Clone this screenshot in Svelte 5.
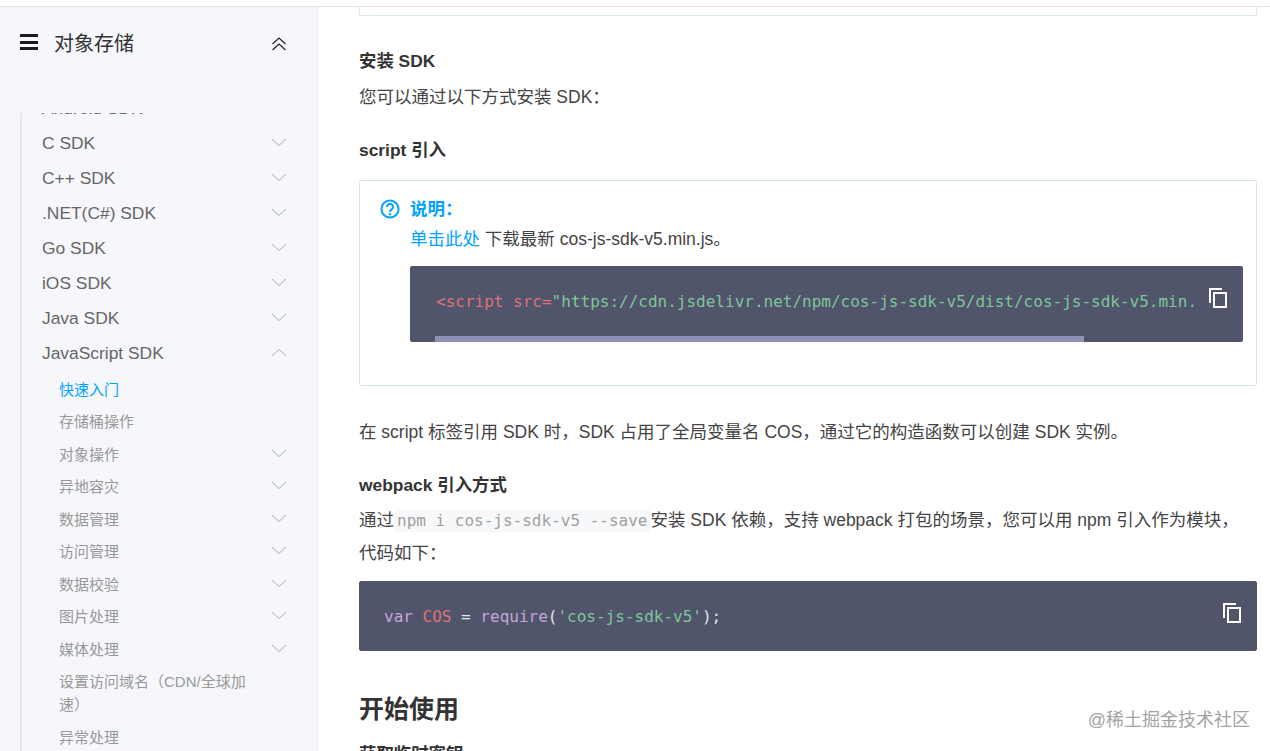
<script>
	const sdks = [
		{ name: 'Android SDK', open: false },
		{ name: 'C SDK', open: false },
		{ name: 'C++ SDK', open: false },
		{ name: '.NET(C#) SDK', open: false },
		{ name: 'Go SDK', open: false },
		{ name: 'iOS SDK', open: false },
		{ name: 'Java SDK', open: false },
		{ name: 'JavaScript SDK', open: true }
	];

	const guides = [
		{ name: '快速入门', active: true },
		{ name: '存储桶操作' },
		{ name: '对象操作', more: true },
		{ name: '异地容灾', more: true },
		{ name: '数据管理', more: true },
		{ name: '访问管理', more: true },
		{ name: '数据校验', more: true },
		{ name: '图片处理', more: true },
		{ name: '媒体处理', more: true },
		{ name: '设置访问域名（CDN/全球加速）' },
		{ name: '异常处理' }
	];
</script>

<div class="page">
	<aside class="sidebar">
		<header class="side-head">
			<span class="burger"><i></i><i></i><i></i></span>
			<span class="side-title">对象存储</span>
			<svg class="collapse" width="16" height="14" viewBox="0 0 16 14" fill="none" stroke="#222" stroke-width="1.2">
				<path d="M1.5 7 8 1l6.5 6" />
				<path d="M1.5 13 8 7l6.5 6" />
			</svg>
		</header>
		<nav class="tree">
			<ul class="sdk-list">
				{#each sdks as sdk}
					<li class="sdk">
						<span>{sdk.name}</span>
						<svg class="chev" width="16" height="9" viewBox="0 0 16 9" fill="none" stroke="#a9abb3" stroke-width="1">
							{#if sdk.open}
								<path d="M1 8 8 1.5 15 8" />
							{:else}
								<path d="M1 1 8 7.5 15 1" />
							{/if}
						</svg>
					</li>
				{/each}
			</ul>
			<ul class="guide-list">
				{#each guides as item}
					<li class="guide" class:active={item.active}>
						<span class="guide-name">{item.name}</span>
						{#if item.more}
							<svg class="chev" width="16" height="9" viewBox="0 0 16 9" fill="none" stroke="#a9abb3" stroke-width="1">
								<path d="M1 1 8 7.5 15 1" />
							</svg>
						{/if}
					</li>
				{/each}
			</ul>
		</nav>
	</aside>

	<main class="content">
		<div class="stub"></div>

		<h3 class="first">安装 SDK</h3>
		<p class="lead">您可以通过以下方式安装 SDK：</p>

		<h3 class="script-title">script 引入</h3>
		<section class="note">
			<div class="note-head">
				<svg width="20" height="20" viewBox="0 0 20 20" fill="none">
					<circle cx="10" cy="10" r="8.6" stroke="#00a4ff" stroke-width="2" />
					<path d="M7 8a3 3 0 1 1 4.8 2.3c-1.1.8-1.8 1.3-1.8 2.5" stroke="#00a4ff" stroke-width="2" />
					<circle cx="10" cy="15.2" r="1.2" fill="#00a4ff" />
				</svg>
				<strong>说明：</strong>
			</div>
			<div class="note-body">
				<p><a href="#top">单击此处</a> 下载最新 cos-js-sdk-v5.min.js。</p>
				<div class="code code-scroll">
					<pre><span class="red">&lt;script</span> <span class="red">src=</span><span class="green">"https://cdn.jsdelivr.net/npm/cos-js-sdk-v5/dist/cos-js-sdk-v5.min.js"</span><span class="red">&gt;&lt;/script&gt;</span></pre>
					<svg class="copy" width="18" height="20" viewBox="0 0 18 20" fill="none" stroke="#fff" stroke-width="2">
						<path d="M1 15V1h12" />
						<rect x="5" y="5" width="12" height="14" />
					</svg>
					<div class="track"><div class="thumb"></div></div>
				</div>
			</div>
		</section>

		<p class="after-note">在 script 标签引用 SDK 时，SDK 占用了全局变量名 COS，通过它的构造函数可以创建 SDK 实例。</p>

		<h3 class="webpack-title">webpack 引入方式</h3>
		<p class="webpack-text">通过<code>npm i cos-js-sdk-v5 --save</code>安装 SDK 依赖，支持 webpack 打包的场景，您可以用 npm 引入作为模块，<br />代码如下：</p>
		<div class="code code-plain">
			<pre><span class="purple">var</span> <span class="red">COS</span> = <span class="purple">require</span>(<span class="green">'cos-js-sdk-v5'</span>);</pre>
			<svg class="copy" width="18" height="20" viewBox="0 0 18 20" fill="none" stroke="#fff" stroke-width="2">
				<path d="M1 15V1h12" />
				<rect x="5" y="5" width="12" height="14" />
			</svg>
		</div>

		<h2>开始使用</h2>
		<h3 class="last">获取临时密钥</h3>
	</main>

	<div class="watermark">@稀土掘金技术社区</div>
</div>

<style>
	:global(body) {
		margin: 0;
		background: #fff;
	}

	.page {
		overflow: hidden;
		display: flex;
		font-family: "Liberation Sans", "Noto Sans CJK SC", sans-serif;
		color: #444;
		font-size: 17.5px;
		position: relative;
		border-top: 1px solid #e3e2e6;
		margin-top: 6px;
		height: 744px;
	}

	ul {
		list-style: none;
		margin: 0;
		padding: 0;
	}

	/* sidebar */
	.sidebar {
		width: 319px;
		flex: none;
		background: #f5f7fb;
		display: flex;
		flex-direction: column;
	}

	.side-head {
		height: 106px;
		flex: none;
		display: flex;
		align-items: flex-start;
		padding: 23px 32px 0 20px;
		box-sizing: border-box;
	}

	.burger {
		width: 18px;
		display: flex;
		flex-direction: column;
		gap: 3.5px;
		margin-top: 4px;
	}

	.burger i {
		display: block;
		height: 3px;
		background: #1a1a1a;
	}

	.side-title {
		font-size: 20px;
		line-height: 26px;
		margin: 1px 0 0 16px;
		color: #333;
		flex: 1;
	}

	.collapse {
		margin-top: 7px;
	}

	.tree {
		flex: 1;
		overflow: hidden;
		margin-left: 20px;
		border-left: 2px solid #e6e8ee;
		margin-right: 32px;
	}

	.sdk-list {
		margin-top: -21px;
	}

	.sdk {
		height: 35px;
		box-sizing: border-box;
		padding: 0 0 2px 20px;
		display: flex;
		align-items: center;
		justify-content: space-between;
		font-size: 17.4px;
		color: #666;
	}

	.chev {
		flex: none;
		margin-top: -2px;
	}

	.guide-list {
		margin-left: -2px;
	}

	.guide {
		display: flex;
		align-items: center;
		justify-content: space-between;
		padding: 4.75px 0 4.75px 37px;
		font-size: 15px;
		line-height: 23px;
		color: #999;
		border-left: 3px solid transparent;
		margin-left: -1px;
	}

	.guide.active {
		color: #00a4ff;
		border-left-color: #00a4ff;
		height: 22px;
		padding: 0 0 0 37px;
		margin-top: 7px;
		margin-bottom: 4.3px;
	}

	.guide.active .guide-name {
		margin-top: -2px;
	}

	.guide-name {
		max-width: 195px;
	}

	/* article */
	.content {
		flex: 1;
		min-width: 0;
		padding: 0 13px 0 40px;
		line-height: 30px;
	}

	.stub {
		height: 8px;
		border: 1px solid #d9e7ec;
		border-top: 0;
		border-radius: 0 0 2px 2px;
	}

	h3 {
		margin: 0;
		font-size: 17.4px;
		line-height: 30px;
		font-weight: 700;
		color: #333;
	}

	h3.first {
		margin-top: 30px;
	}

	p {
		margin: 0;
	}

	.content > p.lead {
		margin-top: 6px;
	}

	h3.script-title {
		margin-top: 23px;
	}

	.note {
		margin-top: 15px;
		height: 206px;
		box-sizing: border-box;
		border: 1px solid #d5e7ee;
		border-radius: 2px;
		padding: 13px 13px 0 20px;
	}

	.note-head {
		display: flex;
		align-items: center;
		gap: 10px;
		height: 30px;
		color: #00a4ff;
	}

	.note-head strong {
		font-weight: 700;
	}

	.note-body {
		padding-left: 30px;
	}

	a {
		color: #00a4ff;
		text-decoration: none;
	}

	.code {
		position: relative;
		background: #50556b;
		border-radius: 2px;
		overflow: hidden;
		box-sizing: border-box;
		font-family: "DejaVu Sans Mono", monospace;
		font-size: 16px;
		line-height: 24px;
		color: #e6e6e6;
	}

	.code pre {
		margin: 0;
		font: inherit;
		white-space: pre;
		overflow: hidden;
	}

	.code-scroll {
		margin-top: 12px;
		height: 76px;
		padding: 24px 47px 0 26px;
	}

	.code-plain {
		margin-top: 12px;
		height: 70px;
		padding: 24px 25px 0 25px;
	}

	.copy {
		position: absolute;
		top: 22px;
		right: 16px;
	}

	.track {
		position: absolute;
		left: 25px;
		right: 0;
		bottom: 0;
		height: 6px;
	}

	.thumb {
		width: 649px;
		height: 100%;
		background: #8f91b6;
	}

	.red { color: #e0707a; }
	.green { color: #7ec699; }
	.purple { color: #c5a5d5; }

	.content > p.after-note {
		margin-top: 31px;
	}

	h3.webpack-title {
		margin-top: 23px;
	}

	.content > p.webpack-text {
		margin-top: 4px;
		line-height: 32px;
	}

	code {
		font-family: "DejaVu Sans Mono", monospace;
		font-size: 16px;
		color: #a0a0a0;
		background: #f7f8fa;
		padding: 2px 3px;
	}

	h2 {
		margin: 41px 0 0;
		font-size: 25px;
		line-height: 34px;
		font-weight: 700;
		color: #333;
	}

	h3.last {
		margin-top: 13px;
	}

	.watermark {
		position: absolute;
		right: 20px;
		top: 701px;
		font-size: 18px;
		line-height: 24px;
		color: #a3a3a3;
		text-shadow: 0 0 3px #fff;
	}
</style>
